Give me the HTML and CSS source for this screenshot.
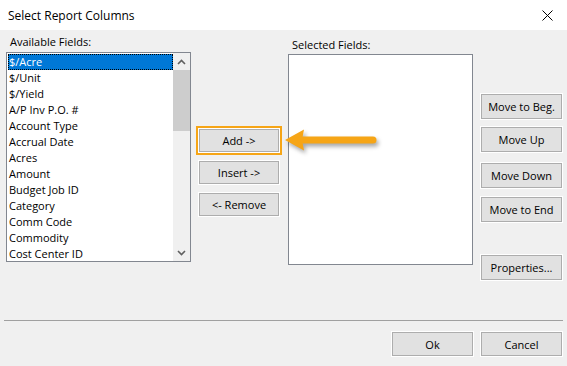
FILE: index.html
```html
<!DOCTYPE html>
<html lang="en">
<head>
  <meta charset="UTF-8">
  <title>Select Report Columns</title>
  <link rel="stylesheet" href="styles.css">
</head>
<body>
  <div class="dialog">
    <div class="titlebar">
      <span class="title">Select Report Columns</span>
      <svg class="close" width="11" height="11" viewBox="0 0 11 11">
        <path d="M0.5 0.5 L10.5 10.5 M10.5 0.5 L0.5 10.5" stroke="#000" stroke-width="1" fill="none"/>
      </svg>
    </div>

    <div class="content">
      <!-- Available fields -->
      <div class="col col-available">
        <div class="label">Available Fields:</div>
        <div class="listbox">
          <ul class="items">
            <li class="selected">$/Acre</li>
            <li>$/Unit</li>
            <li>$/Yield</li>
            <li>A/P Inv P.O. #</li>
            <li>Account Type</li>
            <li>Accrual Date</li>
            <li>Acres</li>
            <li>Amount</li>
            <li>Budget Job ID</li>
            <li>Category</li>
            <li>Comm Code</li>
            <li>Commodity</li>
            <li>Cost Center ID</li>
          </ul>
          <div class="scrollbar">
            <svg class="sb-arrow" width="9" height="6" viewBox="0 0 9 6"><path d="M1 5 L4.5 1.5 L8 5" stroke="#606060" stroke-width="1.6" fill="none"/></svg>
            <div class="sb-track"><div class="sb-thumb"></div></div>
            <svg class="sb-arrow" width="9" height="6" viewBox="0 0 9 6"><path d="M1 1 L4.5 4.5 L8 1" stroke="#606060" stroke-width="1.6" fill="none"/></svg>
          </div>
        </div>
      </div>

      <!-- Add / Insert / Remove -->
      <div class="col col-actions">
        <button class="btn btn-add">Add -&gt;</button>
        <button class="btn">Insert -&gt;</button>
        <button class="btn">&lt;- Remove</button>
      </div>

      <!-- Selected fields -->
      <div class="col col-selected">
        <div class="label">Selected Fields:</div>
        <div class="listbox listbox-selected"></div>
      </div>

      <!-- Ordering -->
      <div class="col col-order">
        <button class="btn btn-tall">Move to Beg.</button>
        <button class="btn btn-tall up">Move Up</button>
        <button class="btn btn-tall down">Move Down</button>
        <button class="btn btn-tall end">Move to End</button>
        <button class="btn btn-tall props">Properties...</button>
      </div>

      <svg class="callout" width="100" height="34" viewBox="0 0 100 34">
        <path d="M2 15 L21 4.5 L19 15 L21 25.5 Z" fill="#f6a516"/>
        <line x1="18" y1="15" x2="90" y2="15" stroke="#f6a516" stroke-width="7" stroke-linecap="round"/>
      </svg>
    </div>

    <div class="separator"></div>

    <div class="footer">
      <button class="btn btn-foot">Ok</button>
      <button class="btn btn-foot">Cancel</button>
    </div>
  </div>
</body>
</html>
```

FILE: styles.css
```css
body {
  margin: 0;
  font-family: "Open Sans", "Noto Sans", sans-serif;
  font-size: 11px;
  color: #000;
  background: #f0f0f0;
}
.dialog {
  width: 567px;
  height: 366px;
  background: #f0f0f0;
}
.titlebar {
  height: 30px;
  background: #fff;
  display: flex;
  align-items: center;
  justify-content: space-between;
  padding: 0 14px 0 8px;
}
.title {
  font-size: 12px;
}
.close {
  display: block;
}
.content {
  position: relative;
  height: 290px;
  display: flex;
  padding-left: 6px;
}
.col {
  display: flex;
  flex-direction: column;
}
.label {
  height: 16px;
  line-height: 16px;
  padding-left: 4px;
}
.col-available {
  width: 185px;
  padding-top: 4px;
}
.col-available .listbox {
  margin-top: 2px;
  height: 210px;
}
.listbox {
  box-sizing: border-box;
  border: 1px solid #828790;
  background: #fff;
  display: flex;
  overflow: hidden;
}
.items {
  list-style: none;
  margin: 0;
  padding: 1px 0 0 1px;
  flex: 1;
}
.items li {
  height: 16px;
  line-height: 16px;
  padding-left: 1px;
  white-space: nowrap;
}
.items li.selected {
  background: #0078d7;
  color: #fff;
  outline: 1px dotted #000;
  outline-offset: -1px;
}
.scrollbar {
  width: 17px;
  background: #f0f0f0;
  display: flex;
  flex-direction: column;
  align-items: center;
}
.sb-arrow {
  display: block;
  margin: 6px 0 5px;
}
.sb-track {
  flex: 1;
  width: 100%;
}
.sb-thumb {
  margin-top: 0;
  height: 61px;
  background: #cdcdcd;
}
.col-actions {
  width: 80px;
  margin-left: 8px;
  padding-top: 99px;
  gap: 9px;
}
.btn {
  box-sizing: border-box;
  font: inherit;
  color: #000;
  background: #e1e1e1;
  border: 1px solid #adadad;
  box-shadow: 0 0 0 1px #fff;
  padding: 0;
  height: 23px;
}
.btn-add {
  outline: 2px solid #f6a516;
  outline-offset: 1px;
}
.col-selected {
  width: 185px;
  margin-left: 9px;
  padding-top: 7px;
}
.listbox-selected {
  margin-top: 1px;
  height: 211px;
}
.col-order {
  width: 81px;
  margin-left: 8px;
  padding-top: 64px;
}
.btn-tall {
  height: 25px;
}
.up {
  margin-top: 8px;
}
.down {
  margin-top: 11px;
}
.end {
  margin-top: 9px;
}
.props {
  margin-top: 33px;
}
.callout {
  position: absolute;
  left: 283px;
  top: 95px;
  filter: drop-shadow(2px 3px 2px rgba(0, 0, 0, 0.35));
}
.separator {
  height: 1px;
  background: #a0a0a0;
  margin: 0 4px;
}
.footer {
  display: flex;
  justify-content: flex-end;
  gap: 8px;
  padding: 11px 5px 0 0;
}
.btn-foot {
  width: 81px;
  height: 24px;
}
```
